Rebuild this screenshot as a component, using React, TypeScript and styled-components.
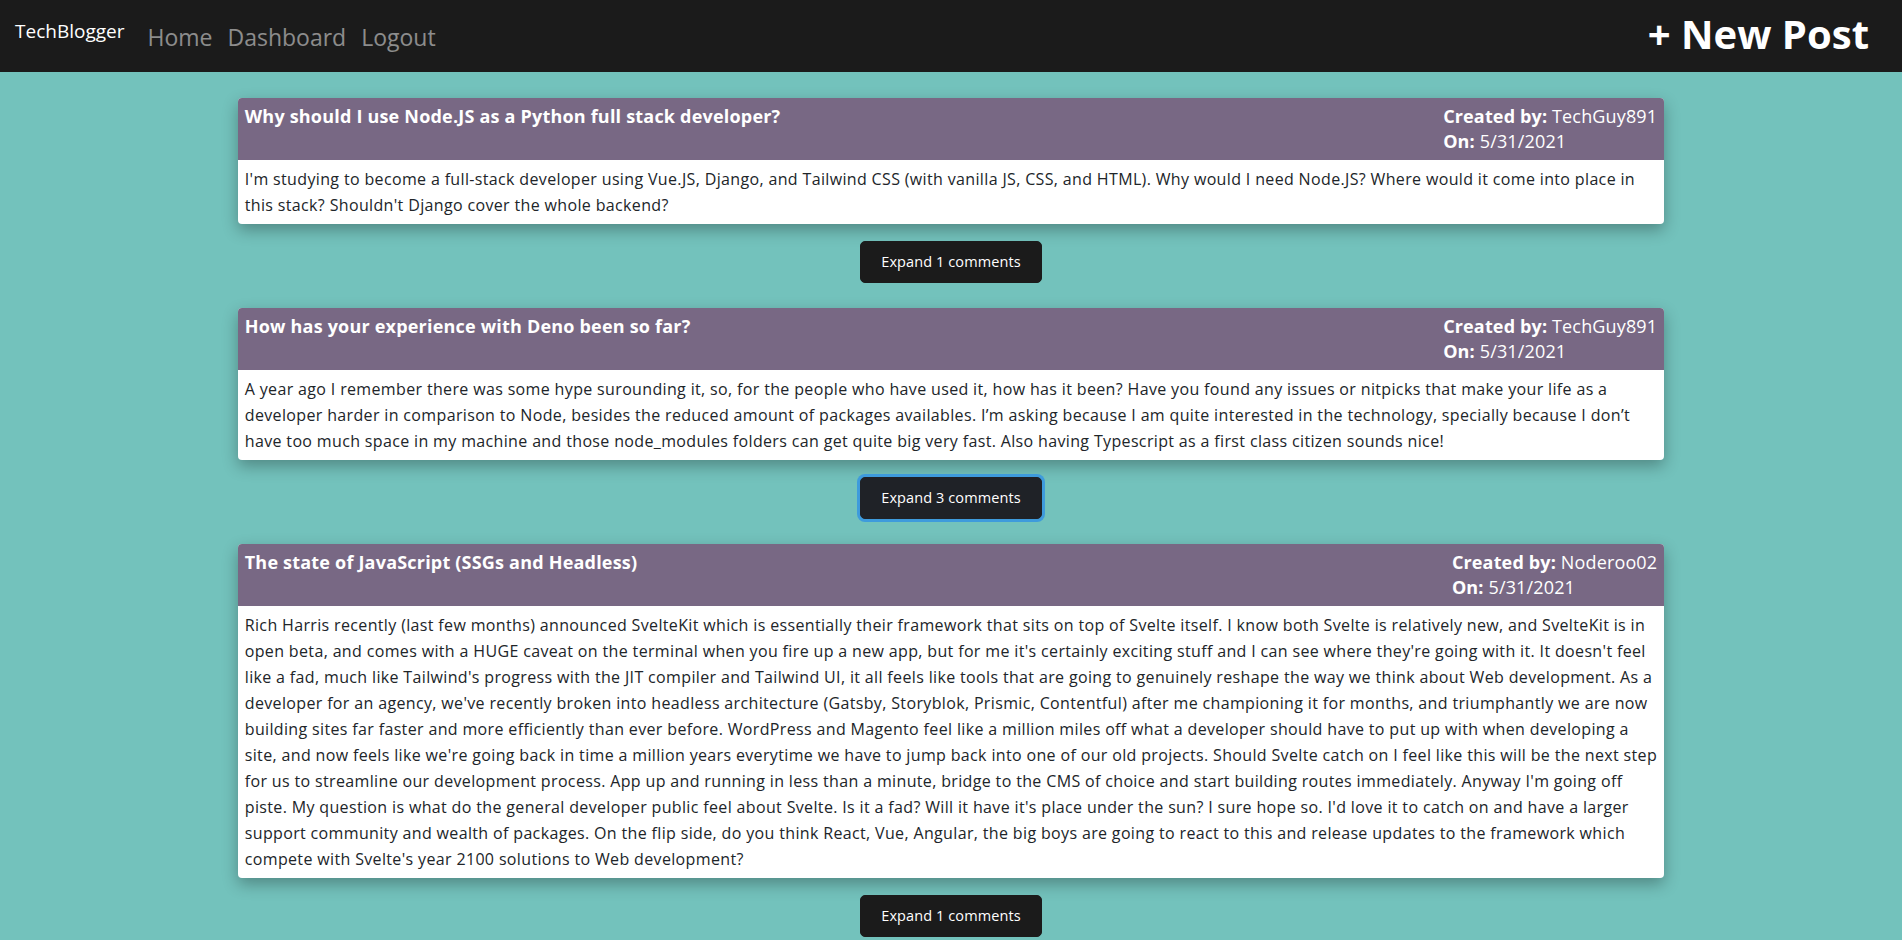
import React from "react";
import styled, { createGlobalStyle } from "styled-components";

const GlobalStyle = createGlobalStyle`
  * { box-sizing: border-box; }
  body {
    margin: 0;
    background: #73c2bc;
    font-family: "Open Sans", "Noto Sans", "Liberation Sans", sans-serif;
    color: #212529;
  }
`;

const NavBar = styled.header`
  height: 72px;
  background: #1b1b1b;
  display: flex;
  align-items: center;
  justify-content: space-between;
  padding: 0 33px 0 15px;
`;

const NavLeft = styled.div`
  display: flex;
  align-items: center;
  gap: 23px;
`;

const Brand = styled.a`
  color: #ffffff;
  font-size: 19px;
  text-decoration: none;
  margin-top: -10px;
`;

const NavLinks = styled.nav`
  display: flex;
  gap: 15px;
  margin-top: 2px;
`;

const NavLink = styled.a`
  color: rgba(255, 255, 255, 0.5);
  font-size: 23px;
  text-decoration: none;
`;

const NewPost = styled.a`
  color: #ffffff;
  font-size: 40px;
  font-weight: 700;
  text-decoration: none;
  margin-top: -6px;
`;

const Main = styled.main`
  width: 75%;
  margin: 26px auto 0;
`;

const Card = styled.article`
  background: #ffffff;
  border-radius: 4px;
  overflow: hidden;
  box-shadow: 0 6px 16px rgba(0, 0, 0, 0.3);
`;

const CardHeader = styled.div`
  background: #786884;
  color: #ffffff;
  display: flex;
  justify-content: space-between;
  align-items: flex-start;
  padding: 6px 7px;
  font-size: 18px;
  line-height: 25px;
  letter-spacing: 0.15px;
`;

const Title = styled.h2`
  margin: 0;
  font-size: 18px;
  font-weight: 700;
  line-height: 25px;
  letter-spacing: 0.2px;
`;

const Meta = styled.div`
  text-align: left;
`;

const Label = styled.b`
  font-weight: 700;
`;

const Body = styled.p`
  margin: 0;
  padding: 6px 7px;
  font-size: 16px;
  line-height: 26px;
  letter-spacing: 0.35px;
`;

const ButtonRow = styled.div`
  display: flex;
  justify-content: center;
  margin: 17px 0 25px;
`;

const ExpandButton = styled.button<{ $focused?: boolean }>`
  background: ${(p) => (p.$focused ? "#1f2227" : "#1b1b1b")};
  color: #ffffff;
  border: 1px solid ${(p) => (p.$focused ? "#1f2227" : "#1b1b1b")};
  border-radius: 5px;
  padding: 8px 20px;
  font-family: inherit;
  font-size: 14.5px;
  line-height: 24px;
  letter-spacing: 0.1px;
  cursor: pointer;
  box-shadow: ${(p) => (p.$focused ? "0 0 0 3px #3e9bdc" : "none")};
`;

type Post = {
  title: string;
  author: string;
  date: string;
  body: string;
  comments: number;
  focused?: boolean;
};

const posts: Post[] = [
  {
    title: "Why should I use Node.JS as a Python full stack developer?",
    author: "TechGuy891",
    date: "5/31/2021",
    body: "I'm studying to become a full-stack developer using Vue.JS, Django, and Tailwind CSS (with vanilla JS, CSS, and HTML). Why would I need Node.JS? Where would it come into place in this stack? Shouldn't Django cover the whole backend?",
    comments: 1,
  },
  {
    title: "How has your experience with Deno been so far?",
    author: "TechGuy891",
    date: "5/31/2021",
    body: "A year ago I remember there was some hype surounding it, so, for the people who have used it, how has it been? Have you found any issues or nitpicks that make your life as a developer harder in comparison to Node, besides the reduced amount of packages availables. I\u2019m asking because I am quite interested in the technology, specially because I don\u2019t have too much space in my machine and those node_modules folders can get quite big very fast. Also having Typescript as a first class citizen sounds nice!",
    comments: 3,
    focused: true,
  },
  {
    title: "The state of JavaScript (SSGs and Headless)",
    author: "Noderoo02",
    date: "5/31/2021",
    body: "Rich Harris recently (last few months) announced SvelteKit which is essentially their framework that sits on top of Svelte itself. I know both Svelte is relatively new, and SvelteKit is in open beta, and comes with a HUGE caveat on the terminal when you fire up a new app, but for me it's certainly exciting stuff and I can see where they're going with it. It doesn't feel like a fad, much like Tailwind's progress with the JIT compiler and Tailwind UI, it all feels like tools that are going to genuinely reshape the way we think about Web development. As a developer for an agency, we've recently broken into headless architecture (Gatsby, Storyblok, Prismic, Contentful) after me championing it for months, and triumphantly we are now building sites far faster and more efficiently than ever before. WordPress and Magento feel like a million miles off what a developer should have to put up with when developing a site, and now feels like we're going back in time a million years everytime we have to jump back into one of our old projects. Should Svelte catch on I feel like this will be the next step for us to streamline our development process. App up and running in less than a minute, bridge to the CMS of choice and start building routes immediately. Anyway I'm going off piste. My question is what do the general developer public feel about Svelte. Is it a fad? Will it have it's place under the sun? I sure hope so. I'd love it to catch on and have a larger support community and wealth of packages. On the flip side, do you think React, Vue, Angular, the big boys are going to react to this and release updates to the framework which compete with Svelte's year 2100 solutions to Web development?",
    comments: 1,
  },
];

export default function App() {
  return (
    <>
      <GlobalStyle />
      <NavBar>
        <NavLeft>
          <Brand href="#">TechBlogger</Brand>
          <NavLinks>
            <NavLink href="#">Home</NavLink>
            <NavLink href="#">Dashboard</NavLink>
            <NavLink href="#">Logout</NavLink>
          </NavLinks>
        </NavLeft>
        <NewPost href="#">+ New Post</NewPost>
      </NavBar>
      <Main>
        {posts.map((p) => (
          <section key={p.title}>
            <Card>
              <CardHeader>
                <Title>{p.title}</Title>
                <Meta>
                  <div>
                    <Label>Created by:</Label> {p.author}
                  </div>
                  <div>
                    <Label>On:</Label> {p.date}
                  </div>
                </Meta>
              </CardHeader>
              <Body>{p.body}</Body>
            </Card>
            <ButtonRow>
              <ExpandButton $focused={p.focused}>
                Expand {p.comments} comments
              </ExpandButton>
            </ButtonRow>
          </section>
        ))}
      </Main>
    </>
  );
}
